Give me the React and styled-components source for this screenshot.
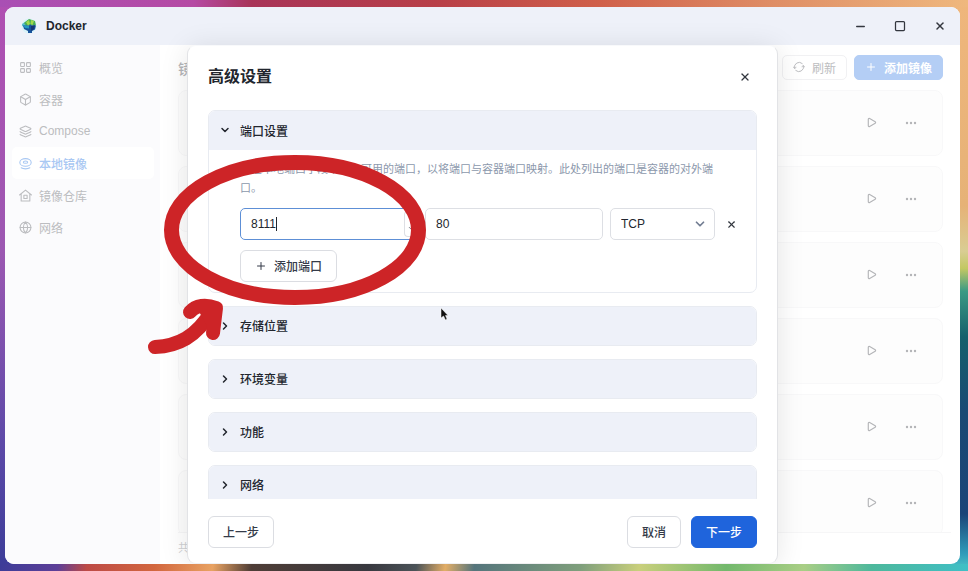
import React, { useState } from "react";
import styled, { createGlobalStyle } from "styled-components";
import {
  Box,
  ChevronDown,
  ChevronRight,
  Globe,
  Layers,
  LayoutGrid,
  Minus,
  Play,
  Plus,
  Square,
  X,
} from "lucide-react";

const GlobalStyle = createGlobalStyle`
  * { box-sizing: border-box; }
  body {
    margin: 0;
    font-family: "Liberation Sans", "Noto Sans CJK SC", sans-serif;
    font-size: 12px;
    color: #22262e;
    overflow: hidden;
  }
  button, input, select { font: inherit; color: inherit; }
  button { cursor: pointer; }
  svg { flex: none; }
`;

const Desktop = styled.div`
  position: relative;
  height: 100vh;
  padding: 7px 8px 7px 5px;
  background:
    linear-gradient(100deg, #3d3c98 0%, #5d3f98 6%, #bd4a46 9%, #d2663e 16%, #e8a262 22%, #4e3d36 26%, #38383f 38%, #4b5358 43%, #e2ad66 46%, #55757c 49%, #7f9f7c 60%, #c9cf7c 66%, #72b86c 75%, #a9ce85 83%, #4db89c 90%, #3fbfc6 100%) bottom / 100% 7px no-repeat,
    linear-gradient(90deg, #a94fb4 0%, #b54aa4 20%, #a83458 26%, #b83f48 45%, #d0604a 62%, #df8e66 80%, #efb87e 100%) top / 100% 7px no-repeat,
    linear-gradient(180deg, #b04fb2 0%, #9c58b2 44%, #5c49a8 78%, #3b3c98 100%) left / 50% 100% no-repeat,
    linear-gradient(180deg, #efb67c 0%, #e6b277 36%, #d9cd93 44%, #c3c862 47%, #3b9a84 51%, #16606c 59%, #1b4a74 72%, #1a4478 90%, #2f9cba 97%, #50c8c8 100%) right / 50% 100% no-repeat;
`;

const Window = styled.div`
  display: flex;
  flex-direction: column;
  height: 100%;
  border-radius: 9px;
  overflow: hidden;
  background: #fff;
`;

const TitleBar = styled.header`
  display: flex;
  flex: none;
  align-items: center;
  gap: 9px;
  height: 38px;
  padding: 0 12px 0 16px;
  background: #eef1f9;
`;

const AppName = styled.h1`
  flex: 1;
  margin: 0;
  font-size: 12px;
  font-weight: 700;
`;

const WindowControls = styled.div`
  display: flex;
  gap: 24px;
`;

const IconButton = styled.button`
  display: grid;
  place-items: center;
  width: 16px;
  height: 16px;
  padding: 0;
  border: 0;
  background: none;
  color: ${(p) => p.$color || "#33373f"};
`;

const Body = styled.div`
  position: relative;
  display: flex;
  flex: 1;
  min-height: 0;
`;

const Sidebar = styled.nav`
  display: flex;
  flex-direction: column;
  width: 155px;
  padding: 6px 6px 6px 7px;
  background: #fbfbfd;
`;

const NavLink = styled.a`
  display: flex;
  align-items: center;
  gap: 7px;
  height: 32px;
  padding: 0 7px;
  border-radius: 5px;
  text-decoration: none;
  color: ${(p) => (p.$active ? "#a9c8f3" : "#bcbdc0")};
  background: ${(p) => (p.$active ? "#fff" : "transparent")};
  font-weight: ${(p) => (p.$active ? 500 : 400)};
`;

const Content = styled.main`
  display: flex;
  flex: 1;
  flex-direction: column;
  min-width: 0;
  padding: 10px 17px 0 18px;
`;

const Toolbar = styled.div`
  display: flex;
  align-items: center;
  gap: 7px;
  height: 25px;
`;

const PageTitle = styled.h2`
  flex: 1;
  margin: 0;
  font-size: 14px;
  font-weight: 500;
  color: #b4b5b8;
`;

const ToolButton = styled.button`
  display: flex;
  align-items: center;
  gap: 7px;
  height: 25px;
  padding: 0 10px 1px;
  border: 1px solid ${(p) => (p.$primary ? "#b4cef5" : "#f1f1f3")};
  border-radius: 5px;
  background: ${(p) => (p.$primary ? "#b4cef5" : "#fff")};
  color: ${(p) => (p.$primary ? "#fff" : "#bcbdc0")};
  font-weight: ${(p) => (p.$primary ? 700 : 400)};
`;

const ImageList = styled.ul`
  display: flex;
  flex: 1;
  flex-direction: column;
  gap: 10px;
  min-height: 0;
  margin: 10px 0 0;
  padding: 0;
  overflow: hidden;
  list-style: none;
`;

const ImageCard = styled.li`
  display: flex;
  flex: none;
  align-items: center;
  justify-content: flex-end;
  gap: 24px;
  height: 66px;
  padding: 0 23px 1px 0;
  border: 1px solid #f8f8f9;
  border-radius: 8px;
  background: #fdfdfd;
`;

const StatusLine = styled.footer`
  height: 32px;
  margin-right: -8px;
  border-top: 1px solid #f6f6f7;
  font-size: 11px;
  line-height: 31px;
  color: #cfd0d3;
`;

const Overlay = styled.div`
  position: absolute;
  inset: 0;
  display: flex;
  justify-content: center;
`;

const Dialog = styled.section`
  display: flex;
  flex-direction: column;
  width: 591px;
  max-width: 100%;
  height: 100%;
  padding: 0 20px 15px;
  border: 1px solid #e2e3e6;
  border-top-color: #f8f9fb;
  border-bottom-color: #f0f0f2;
  border-radius: 9px;
  background: #fff;
  box-shadow: 0 2px 28px rgba(0, 0, 0, 0.1);
`;

const DialogHeader = styled.header`
  display: flex;
  flex: none;
  align-items: center;
  justify-content: space-between;
  height: 64px;
  padding: 0 4px 2px 0;
`;

const DialogTitle = styled.h2`
  margin: 0;
  font-size: 16px;
  line-height: 20px;
  font-weight: 700;
`;

const Panels = styled.div`
  display: flex;
  flex: 1;
  flex-direction: column;
  gap: 13px;
  min-height: 0;
  overflow: hidden;
`;

const Panel = styled.section`
  flex: none;
  border: 1px solid #e8ebf1;
  border-radius: 7px;
  overflow: hidden;
  background: #fff;
`;

const PanelToggle = styled.button`
  display: flex;
  align-items: center;
  gap: 9px;
  width: 100%;
  height: ${(p) => (p.$open ? "39px" : "38px")};
  padding: 0 10px 1px;
  border: 0;
  background: #eef1f9;
  font-weight: 500;
  text-align: left;
`;

const PanelBody = styled.div`
  display: flex;
  flex-direction: column;
  align-items: flex-start;
  gap: 10px;
  padding: 10px 16px 10px 31px;
`;

const Hint = styled.p`
  margin: 0;
  padding-right: 12px;
  font-size: 11px;
  line-height: 19px;
  color: #8c98ac;
`;

const PortRow = styled.div`
  display: flex;
  align-items: center;
  gap: 7px;
  width: 100%;
`;

const Field = styled.label`
  position: relative;
  display: flex;
  flex: ${(p) => (p.$fixed ? "0 0 105px" : "1 1 0")};
  align-items: center;
  min-width: 0;
  height: 32px;
  border: 1px solid ${(p) => (p.$focused ? "#5d8fd6" : "#dddfe4")};
  border-radius: 5px;
  background: #fff;
`;

const TextInput = styled.input`
  width: 100%;
  height: 30px;
  padding: 0 10px;
  border: 0;
  outline: 0;
  background: none;
`;

const Caret = styled.span`
  position: absolute;
  left: 35px;
  width: 1px;
  height: 14px;
  background: #22262e;
`;

const Stepper = styled.span`
  display: flex;
  flex: none;
  align-items: flex-end;
  width: 13px;
  height: 26px;
  padding: 0 0 3px 2px;
  border: 1px solid #dddfe4;
  border-right: 0;
  border-radius: 4px 0 0 4px;
  color: #555a64;
`;

const Select = styled.select`
  width: 100%;
  height: 30px;
  padding: 0 10px;
  border: 0;
  outline: 0;
  appearance: none;
  background: none;
`;

const SelectArrow = styled(ChevronDown)`
  position: absolute;
  right: 7px;
  color: #727d92;
  pointer-events: none;
`;

const RemoveButton = styled(IconButton)`
  margin-left: 1px;
  margin-right: 1px;
`;

const Button = styled.button`
  display: flex;
  align-items: center;
  justify-content: center;
  gap: 7px;
  height: 32px;
  padding: 0 14px 1px;
  border: 1px solid ${(p) => (p.$primary ? "#1f64dc" : "#dbdde2")};
  border-radius: 6px;
  background: ${(p) => (p.$primary ? "#1f64dc" : "#fff")};
  color: ${(p) => (p.$primary ? "#fff" : "#353b49")};
  font-weight: 500;
`;

const DialogFooter = styled.footer`
  display: flex;
  gap: 10px;
  padding-top: 17px;
`;

const FooterSpacer = styled.div`
  flex: 1;
`;

const Marker = styled.svg`
  position: absolute;
  left: 140px;
  top: 145px;
  pointer-events: none;
`;

const Pointer = styled.svg`
  position: absolute;
  left: 440px;
  top: 307px;
  pointer-events: none;
`;

function DockerLogo() {
  return (
    <svg width="16" height="16" viewBox="0 0 16 16" aria-hidden="true">
      <circle cx="8" cy="8" r="7.5" fill="#d9f3f8" />
      <path d="M1 6 7 2v5L4 9 1 8z" fill="#58bccb" />
      <path d="M3 5 8 1l6 2 1 4.500H5z" fill="#49ad55" />
      <path d="m5 4 3-2 1 4-2 1.500zM10 2l3 1-1.500 4-2-1z" fill="#a2d94c" />
      <path d="M2 7.500h6l1-1 2 1h4l-1 4-3 1.500v2H7v-2l-4-2z" fill="#17539c" />
      <path d="m2 7.500 6 .5v2.500l-4-.5z" fill="#229ac0" />
      <path d="m10 8 4-1-1 4-3 2z" fill="#153675" />
    </svg>
  );
}

function DiskIcon() {
  return (
    <svg width="13" height="13" viewBox="0 0 24 24" fill="none" stroke="currentColor" strokeWidth="2" strokeLinecap="round">
      <ellipse cx="12" cy="10" rx="10.500" ry="7" />
      <ellipse cx="12" cy="9.500" rx="4" ry="2" />
      <path d="M4 20c4 2.500 12 2.500 16 0" />
    </svg>
  );
}

function RepoIcon() {
  return (
    <svg width="13" height="13" viewBox="0 0 24 24" fill="none" stroke="currentColor" strokeWidth="2" strokeLinecap="round" strokeLinejoin="round">
      <path d="M1 11 12 2l11 9M4 9v13h16V9" />
      <rect x="9" y="11.500" width="6" height="6" />
    </svg>
  );
}

function RefreshIcon() {
  return (
    <svg width="12" height="12" viewBox="0 0 24 24" fill="none" stroke="currentColor" strokeWidth="2" strokeLinecap="round" strokeLinejoin="round">
      <path d="M3 14A9.500 9.500 0 0 1 18.500 5M21 10A9.500 9.500 0 0 1 5.500 19" />
      <path d="m1 12 2 3 3-2M18 11l3-2 2 3" />
    </svg>
  );
}

function DotsIcon() {
  return (
    <svg width="12" height="4" viewBox="0 0 12 4" fill="#b4b5b8">
      <circle cx="2" cy="2" r="1.200" />
      <circle cx="6" cy="2" r="1.200" />
      <circle cx="10" cy="2" r="1.200" />
    </svg>
  );
}

const navItems = [
  { label: "概览", Icon: LayoutGrid },
  { label: "容器", Icon: Box },
  { label: "Compose", Icon: Layers },
  { label: "本地镜像", Icon: DiskIcon, active: true },
  { label: "镜像仓库", Icon: RepoIcon },
  { label: "网络", Icon: Globe },
];

const closedPanels = ["存储位置", "环境变量", "功能", "网络"];
const images = [1, 2, 3, 4, 5, 6];

function PortSettings() {
  const [localPort, setLocalPort] = useState("8111");
  const [containerPort, setContainerPort] = useState("80");

  return (
    <Panel>
      <PanelToggle type="button" aria-expanded="true" $open>
        <ChevronDown size={12} strokeWidth={3} />
        端口设置
      </PanelToggle>
      <PanelBody>
        <Hint>
          请在本地端口字段中输入可用的端口，以将端口与容器端口映射。此处列出的端口是容器的对外端口。
        </Hint>
        <PortRow>
          <Field $focused>
            <TextInput
              aria-label="本地端口"
              inputMode="numeric"
              value={localPort}
              onChange={(e) => setLocalPort(e.target.value)}
            />
            <Caret />
            <Stepper>
              <ChevronDown size={9} />
            </Stepper>
          </Field>
          <Field>
            <TextInput
              aria-label="容器端口"
              inputMode="numeric"
              value={containerPort}
              onChange={(e) => setContainerPort(e.target.value)}
            />
          </Field>
          <Field $fixed>
            <Select aria-label="协议" defaultValue="TCP">
              <option>TCP</option>
              <option>UDP</option>
            </Select>
            <SelectArrow size={14} strokeWidth={3} />
          </Field>
          <RemoveButton type="button" aria-label="删除端口">
            <X size={11} strokeWidth={2.5} />
          </RemoveButton>
        </PortRow>
        <Button type="button">
          <Plus size={12} />
          添加端口
        </Button>
      </PanelBody>
    </Panel>
  );
}

export default function App() {
  return (
    <Desktop lang="zh-CN">
      <GlobalStyle />
      <Window>
        <TitleBar>
          <DockerLogo />
          <AppName>Docker</AppName>
          <WindowControls>
            <IconButton type="button" aria-label="最小化">
              <Minus size={13} strokeWidth={2.5} />
            </IconButton>
            <IconButton type="button" aria-label="最大化">
              <Square size={12} strokeWidth={2.5} />
            </IconButton>
            <IconButton type="button" aria-label="关闭">
              <X size={12} strokeWidth={3} />
            </IconButton>
          </WindowControls>
        </TitleBar>
        <Body>
          <Sidebar>
            {navItems.map(({ label, Icon, active }) => (
              <NavLink key={label} href="#" $active={active}>
                <Icon size={13} />
                {label}
              </NavLink>
            ))}
          </Sidebar>
          <Content>
            <Toolbar>
              <PageTitle>镜像</PageTitle>
              <ToolButton type="button">
                <RefreshIcon />
                刷新
              </ToolButton>
              <ToolButton type="button" $primary>
                <Plus size={12} />
                添加镜像
              </ToolButton>
            </Toolbar>
            <ImageList>
              {images.map((id) => (
                <ImageCard key={id}>
                  <IconButton type="button" aria-label="运行" $color="#b4b5b8">
                    <Play size={11} strokeWidth={2.5} />
                  </IconButton>
                  <IconButton type="button" aria-label="更多" $color="#b4b5b8">
                    <DotsIcon />
                  </IconButton>
                </ImageCard>
              ))}
            </ImageList>
            <StatusLine>共</StatusLine>
          </Content>
          <Overlay>
            <Dialog role="dialog" aria-labelledby="dialog-title">
              <DialogHeader>
                <DialogTitle id="dialog-title">高级设置</DialogTitle>
                <IconButton type="button" aria-label="关闭对话框">
                  <X size={12} strokeWidth={2.5} />
                </IconButton>
              </DialogHeader>
              <Panels>
                <PortSettings />
                {closedPanels.map((name) => (
                  <Panel key={name}>
                    <PanelToggle type="button" aria-expanded="false">
                      <ChevronRight size={12} strokeWidth={3} />
                      {name}
                    </PanelToggle>
                  </Panel>
                ))}
              </Panels>
              <DialogFooter>
                <Button type="button">上一步</Button>
                <FooterSpacer />
                <Button type="button">取消</Button>
                <Button type="button" $primary>
                  下一步
                </Button>
              </DialogFooter>
            </Dialog>
          </Overlay>
        </Body>
      </Window>
      <Marker width="296" height="216" viewBox="140 145 296 216" fill="none" stroke="#cd2427" strokeLinecap="round" strokeLinejoin="round" aria-hidden="true">
        <ellipse cx="295" cy="230" rx="123.500" ry="67.500" strokeWidth="15" />
        <path d="M155 347C178 346 196 337 212 311" strokeWidth="14" />
        <path d="M190 312C196 305 206 304 216 308L213 333M205 308l8 14" strokeWidth="14" />
      </Marker>
      <Pointer width="9" height="14" viewBox="0 0 9 14" aria-hidden="true">
        <path d="M1 1v10l2.500-2 2 4 1.500-1-1.500-3.500H8z" fill="#111" stroke="#fff" strokeWidth="0.500" />
      </Pointer>
    </Desktop>
  );
}
